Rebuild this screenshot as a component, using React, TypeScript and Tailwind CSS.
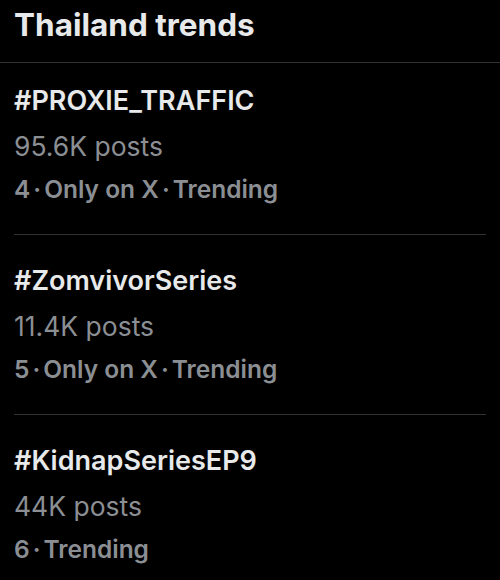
import React from "react";

const trends = [
  { tag: "#PROXIE_TRAFFIC", posts: "95.6K posts", meta: ["4", "Only on X", "Trending"] },
  { tag: "#ZomvivorSeries", posts: "11.4K posts", meta: ["5", "Only on X", "Trending"] },
  { tag: "#KidnapSeriesEP9", posts: "44K posts", meta: ["6", "Trending"] },
];

export default function App() {
  return (
    <div className="w-[500px] h-[580px] bg-black overflow-hidden" style={{ fontFamily: "Inter, 'Noto Sans', sans-serif" }}>
      <div className="h-[63px] flex items-center px-[14px] border-b border-[#2f3336]">
        <h1 className="text-[31.5px] font-bold text-[#e7e9ea] leading-none -mt-[12px]">Thailand trends</h1>
      </div>
      {trends.map((t, i) => (
        <div key={i} className={`mx-[14px] ${i < trends.length - 1 ? "border-b border-[#2f3336]" : ""}`}>
          <div className={`${i === 0 ? "pt-[13px]" : "pt-[21px]"} pb-[24px] flex flex-col`}>
            <div className="h-[48px] flex items-center text-[27px] font-semibold text-[#e7e9ea] leading-none">{t.tag}</div>
            <div className="h-[44px] flex items-center text-[26.5px] font-normal text-[#8b8f94] leading-none">{t.posts}</div>
            <div className="h-[42px] flex items-center text-[24.5px] font-semibold text-[#8b8f94] leading-none">
              {t.meta.map((m, j) => (
                <React.Fragment key={j}>
                  {j > 0 && <span className="mx-[3px]">·</span>}
                  <span>{m}</span>
                </React.Fragment>
              ))}
            </div>
          </div>
        </div>
      ))}
    </div>
  );
}
